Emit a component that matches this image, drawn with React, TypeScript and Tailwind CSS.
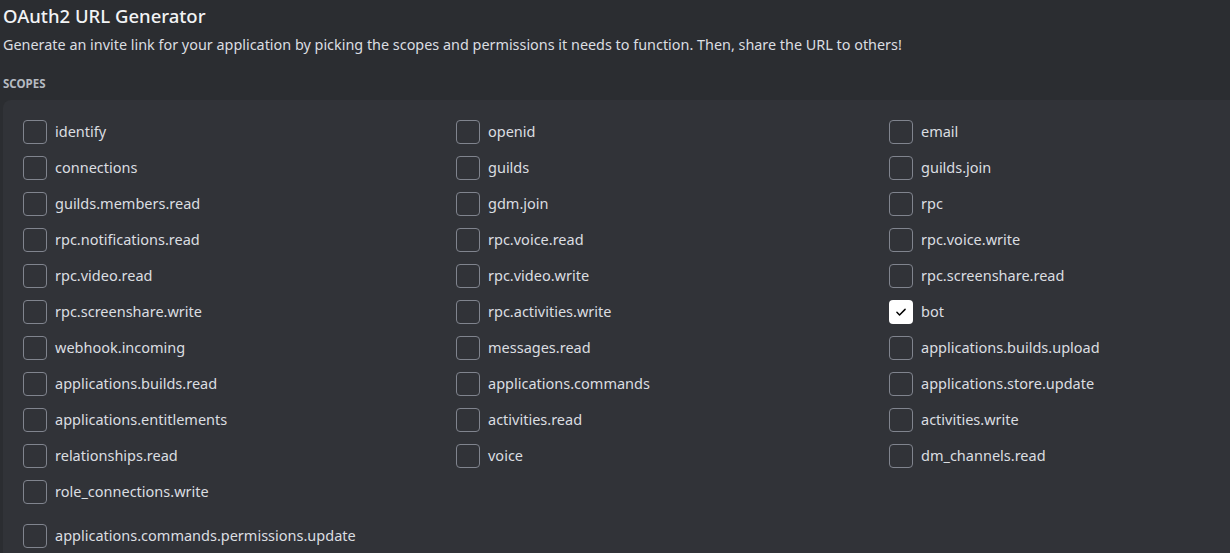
import React from "react";

const scopes: string[] = [
  "identify", "openid", "email",
  "connections", "guilds", "guilds.join",
  "guilds.members.read", "gdm.join", "rpc",
  "rpc.notifications.read", "rpc.voice.read", "rpc.voice.write",
  "rpc.video.read", "rpc.video.write", "rpc.screenshare.read",
  "rpc.screenshare.write", "rpc.activities.write", "bot",
  "webhook.incoming", "messages.read", "applications.builds.upload",
  "applications.builds.read", "applications.commands", "applications.store.update",
  "applications.entitlements", "activities.read", "activities.write",
  "relationships.read", "voice", "dm_channels.read",
  "role_connections.write",
];

const Checkbox = ({ label, checked }: { label: string; checked?: boolean }) => (
  <label className="flex items-center h-[36px] gap-2">
    {checked ? (
      <span className="w-6 h-6 rounded-[4px] bg-white flex items-center justify-center shrink-0">
        <svg width="14" height="14" viewBox="0 0 24 24" fill="none" stroke="#000" strokeWidth="2.5" strokeLinecap="round" strokeLinejoin="round">
          <path d="M5 12.5l4.5 4.5L19 7.5" />
        </svg>
      </span>
    ) : (
      <span className="w-6 h-6 rounded-[4px] border border-[#80848e] shrink-0" />
    )}
    <span className="text-[14.5px] text-[#dbdee1]">{label}</span>
  </label>
);

export default function App() {
  return (
    <div className="w-[1230px] h-[553px] overflow-hidden bg-[#2b2d31] px-[3px] pt-[3px]" style={{ fontFamily: '"Noto Sans", "Open Sans", sans-serif' }}>
      <h1 className="text-[18.5px] font-medium text-[#f2f3f5] leading-[26px]">OAuth2 URL Generator</h1>
      <p className="mt-[5px] text-[14.4px] text-[#dbdee1] leading-[22px]">
        Generate an invite link for your application by picking the scopes and permissions it needs to function. Then, share the URL to others!
      </p>
      <div className="mt-[20px] text-[11.5px] font-bold uppercase text-[#b5bac1] leading-[16px]">Scopes</div>
      <div className="mt-[8px] w-[1340px] bg-[#313338] rounded-[8px] pl-[20px] pt-[14px] pb-4">
        <div className="grid grid-cols-[433px_433px_433px]">
          {scopes.map((s) => (
            <Checkbox key={s} label={s} checked={s === "bot"} />
          ))}
        </div>
        <div className="mt-2">
          <Checkbox label="applications.commands.permissions.update" />
        </div>
      </div>
    </div>
  );
}
